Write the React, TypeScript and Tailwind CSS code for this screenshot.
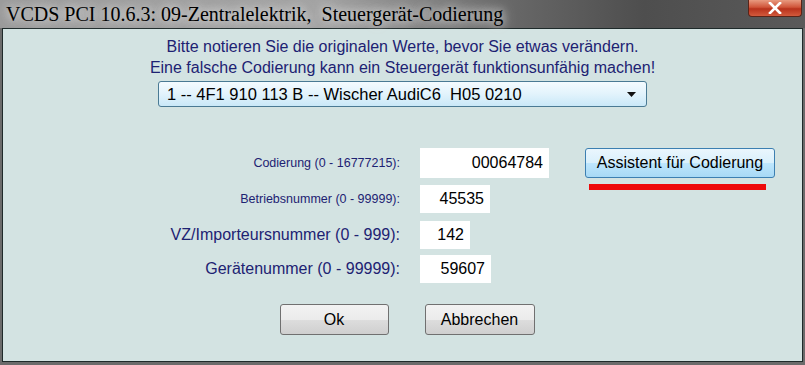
import React from "react";

const arial = { fontFamily: '"Liberation Sans", Arial, sans-serif' };

function Field({
  label,
  value,
  small,
  inputW,
  inputH,
  children,
}: {
  label: string;
  value: string;
  small?: boolean;
  inputW: string;
  inputH: string;
  children?: React.ReactNode;
}) {
  return (
    <div className="flex items-center">
      <div
        className={`w-[397px] shrink-0 text-right text-[#1d2272] ${
          small ? "text-[12.5px]" : "text-[16px]"
        }`}
      >
        {label}
      </div>
      <div
        className={`ml-[20px] flex shrink-0 items-center justify-end bg-white pr-[6px] text-[16px] text-black ${inputW} ${inputH}`}
      >
        {value}
      </div>
      {children}
    </div>
  );
}

export default function App() {
  return (
    <div
      className="flex h-[365px] w-[805px] flex-col overflow-hidden bg-[#6b6b6b]"
      style={arial}
    >
      {/* title bar */}
      <div className="relative flex h-[28px] shrink-0 items-center bg-[linear-gradient(90deg,#9a9a9a_0%,#a3a3a3_40%,#6a6a6a_62%,#4e4e4e_80%,#5a5a5a_100%)] pl-[6px]">
        <span
          className="text-[20px] leading-none text-black [text-shadow:0_0_8px_#e8e8e8,0_0_14px_#d8d8d8]"
          style={{ fontFamily: '"Liberation Serif", "Times New Roman", serif' }}
        >
          VCDS PCI 10.6.3: 09-Zentralelektrik,&nbsp; Steuergerät-Codierung
        </span>
        <div className="absolute right-[3px] top-0 flex h-[17px] w-[54px] items-center justify-center rounded-b-[4px] border border-t-0 border-[#5a2418] bg-[linear-gradient(180deg,#e89a80_0%,#d0553a_45%,#b8321c_55%,#d25a3c_100%)]">
          <svg width="14" height="12" viewBox="0 0 14 12">
            <path
              d="M2 1 L12 11 M12 1 L2 11"
              stroke="#fff"
              strokeWidth="2.6"
              strokeLinecap="square"
            />
          </svg>
        </div>
      </div>

      {/* body */}
      <div className="mx-[2px] mb-[3px] flex flex-1 flex-col items-center border border-[#1e2a2a] bg-[#d3e3e2] pt-[7px]">
        <p className="text-center text-[16px] leading-[21px] text-[#1d2272]">
          Bitte notieren Sie die originalen Werte, bevor Sie etwas verändern.
          <br />
          Eine falsche Codierung kann ein Steuergerät funktionsunfähig machen!
        </p>

        <div className="mt-[3px] flex h-[26px] w-[489px] items-center justify-between rounded-[3px] border border-[#4a7a94] bg-[linear-gradient(180deg,#f4fbff_0%,#e2f3fc_50%,#c9e8f8_100%)] pl-[8px] pr-[10px] text-[16.5px] text-black">
          <span className="whitespace-pre">
            1 -- 4F1 910 113 B -- Wischer AudiC6  H05 0210
          </span>
          <svg width="9" height="5" viewBox="0 0 9 5">
            <path d="M0 0 H9 L4.5 5 Z" fill="#111" />
          </svg>
        </div>

        <div className="mt-[41px] flex w-full flex-col">
          <Field
            label="Codierung (0 - 16777215):"
            value="00064784"
            small
            inputW="w-[129px]"
            inputH="h-[30px]"
          >
            <div className="relative ml-[36px]">
              <div className="flex h-[30px] w-[190px] items-center justify-center rounded-[3px] border border-[#3c7fb1] bg-[linear-gradient(180deg,#eaf6fd_0%,#d9f0fc_50%,#bee6fd_51%,#a7d9f5_100%)] text-[16px] text-black">
                Assistent für Codierung
              </div>
              <div className="absolute left-[4px] top-[36px] h-[6px] w-[177px] bg-[#ee0a0a]" />
            </div>
          </Field>
          <div className="mt-[7px]">
            <Field
              label="Betriebsnummer (0 - 99999):"
              value="45535"
              small
              inputW="w-[70px]"
              inputH="h-[28px]"
            />
          </div>
          <div className="mt-[8px]">
            <Field
              label="VZ/Importeursnummer (0 - 999):"
              value="142"
              inputW="w-[50px]"
              inputH="h-[28px]"
            />
          </div>
          <div className="mt-[6px]">
            <Field
              label="Gerätenummer (0 - 99999):"
              value="59607"
              inputW="w-[71px]"
              inputH="h-[28px]"
            />
          </div>
        </div>

        <div className="ml-[9px] mt-[21px] flex gap-[36px]">
          <div className="flex h-[31px] w-[109px] items-center justify-center rounded-[3px] border border-[#707070] bg-[linear-gradient(180deg,#f2f2f2_0%,#ebebeb_50%,#dddddd_51%,#cfcfcf_100%)] text-[16px] text-black">
            Ok
          </div>
          <div className="flex h-[31px] w-[110px] items-center justify-center rounded-[3px] border border-[#707070] bg-[linear-gradient(180deg,#f2f2f2_0%,#ebebeb_50%,#dddddd_51%,#cfcfcf_100%)] text-[16px] text-black">
            Abbrechen
          </div>
        </div>
      </div>
    </div>
  );
}
